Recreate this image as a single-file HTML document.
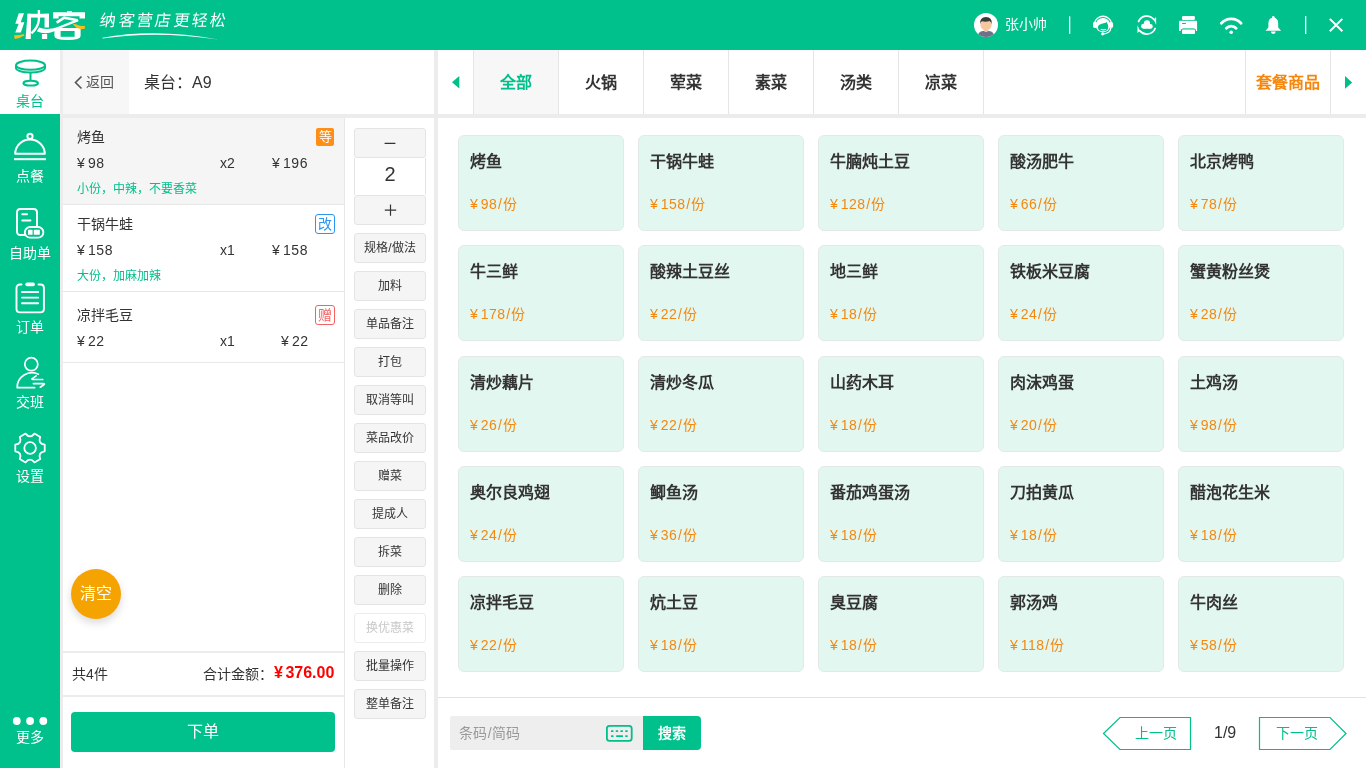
<!DOCTYPE html>
<html lang="zh-CN"><head><meta charset="utf-8">
<style>
*{margin:0;padding:0;box-sizing:border-box}
html,body{width:1366px;height:768px;overflow:hidden;background:#fff;font-family:"Liberation Sans",sans-serif;color:#333}
.a{position:absolute}
#hdr{left:0;top:0;width:1366px;height:50px;background:#00c08c}
#side{left:0;top:50px;width:60px;height:718px;background:#00c08c}
.nav{position:absolute;left:0;width:60px;text-align:center;color:#fff;font-size:14px;line-height:14px;white-space:nowrap}
.gap{background:#ececec}
.y{font-style:normal;margin-right:2.5px}
.item{position:absolute;left:63px;width:281px;border-bottom:1px solid #e8e8e8}
.item .t{position:absolute;left:14px;font-size:14px;line-height:14px;color:#333;white-space:nowrap}
.item .g{position:absolute;left:14px;font-size:12px;line-height:12px;color:#00bf8b;white-space:nowrap}
.badge{position:absolute;left:252px;width:20px;height:20px;font-size:14px;line-height:18px;text-align:center;border-radius:3px}
.btn{position:absolute;left:354px;width:72px;height:30px;background:#f5f5f5;border:1px solid #e4e4e4;border-radius:3px;font-size:12px;line-height:29.5px;text-align:center;color:#333;white-space:nowrap}
.tab{position:absolute;top:50px;width:85px;height:64px;border-right:1px solid #e6e6e6;text-align:center;font-size:16px;font-weight:bold;line-height:66px;color:#333}
.card{position:absolute;width:166px;height:96px;background:#e3f7f1;border:1px solid #e2e9e6;border-radius:6px}
.card .n{position:absolute;left:11px;top:17px;font-size:16px;line-height:18px;font-weight:bold;color:#333;white-space:nowrap}
.card .p{position:absolute;left:11px;top:60px;font-size:14px;line-height:16px;color:#f4880f;white-space:nowrap;letter-spacing:.5px}
</style></head><body><div id="wrap" style="position:absolute;left:0;top:0;width:1366px;height:768px;will-change:transform">
<!-- header -->
<div id="hdr" class="a"></div>
<svg class="a" style="left:0;top:0" width="100" height="50" viewBox="0 0 100 50">
<path d="M18.78 13.20L24.06 13.20L20.66 22.28L24.35 22.28L20.83 32.53L15.27 32.53L18.67 23.74L15.27 23.74Z" fill="#fff"/>
<path d="M27.57 13.78L31.08 13.78L30.79 38.97L25.52 38.97Z" fill="#fff"/>
<path d="M27.57 13.78L48.95 13.78L48.95 17.59L27.57 17.59Z" fill="#fff"/>
<path d="M44.55 13.78L48.95 13.78L48.95 27.4L44.55 27.6Z" fill="#fff"/>
<path d="M41.92 33.99L47.19 33.99L47.19 38.97L41.92 38.97Z" fill="#fff"/>
<path d="M38.9 10V19.5Q38.6 27 31.4 33.4" stroke="#fff" stroke-width="2.4" fill="none"/>
<path d="M67.05 11.1H71.9V13.5H67.05Z" fill="#fff"/>
<path d="M53.1 12.2H85V18.4H79.5V16.2H58.6V18.4H53.1Z" fill="#fff"/>
<path d="M54.4 27.9H80.6V36Q80.6 39.9 67.5 39.9Q54.4 39.9 54.4 36Z" fill="#fff"/>
<path d="M60.6 31H74.6V36.8H60.6Z" fill="#00c08c"/>
<path d="M56.6 22.7L64.3 17.7L77.6 20.3" stroke="#fff" stroke-width="2.7" fill="none" stroke-linejoin="round"/>
<path d="M77.8 19.1L62 25.2Q47.5 31.4 39.2 27.6L36.8 31.2Q45 35.4 54.4 31.3L61 27.9L78.6 21.3Z" fill="#fff"/>
<path d="M14.10 35.16Q18.78 35.45 24.06 33.99L24.35 35.45Q19.96 38.38 14.69 38.97Z" fill="#fbbd14"/>
<path d="M72.8 24.3Q75 23.3 77.5 25Q80 26.3 85 25.9L84.7 28.8Q80 29.3 77.5 28.2Q75 27 72.8 24.3Z" fill="#fbbd14"/>
</svg>
<div class="a" style="left:99px;top:12px;font-size:16px;line-height:17px;font-weight:300;color:#fff;letter-spacing:2.3px;transform:skewX(-8deg);transform-origin:0 100%">纳客营店更轻松</div>
<svg class="a" style="left:99px;top:25px" width="130" height="20"><path d="M3.5 12.8Q56.75 3.15 119 14.5Q56.75 5.6 3.5 13.6Z" fill="#fff"/></svg>

<svg class="a" style="left:960px;top:0" width="406" height="50" viewBox="960 0 406 50">
<defs><clipPath id="av"><circle cx="986" cy="24.9" r="12"/></clipPath></defs>
<circle cx="986" cy="24.9" r="12" fill="#fff"/>
<g clip-path="url(#av)">
<path d="M977.5 37Q978 31.5 983 31L986 30.5L989 31Q994 31.5 994.5 37Z" fill="#6f7189"/>
<path d="M984.3 28.5H987.7V31.5Q986 32.6 984.3 31.5Z" fill="#f2c29a"/>
<ellipse cx="986" cy="25" rx="5.6" ry="5.4" fill="#f5c8a0"/>
<path d="M980 24.5Q979.5 17 986 17Q992.5 17 991.8 24.5Q991.3 21.5 989.5 21Q986 22.3 982 21.3Q980.3 22 980 24.5Z" fill="#3a3a3a"/>
</g>
<rect x="1069" y="16.3" width="1.3" height="17.5" fill="#fff"/>
<rect x="1305" y="16" width="1.3" height="18" fill="#fff"/>
<g fill="#fff">
<circle cx="1103" cy="25.2" r="7.3"/>
<rect x="1093" y="21.8" width="4" height="6.2" rx="1.8"/>
<rect x="1109.2" y="22" width="3.9" height="6" rx="1.8"/>
<circle cx="1102.6" cy="34" r="1.45"/>
</g>
<path d="M1098 26.5Q1098.5 24.6 1101 24Q1104 23.4 1105.6 22.8L1106.6 21.9Q1108.3 24.5 1108.3 27.5Q1108 31.2 1103.2 31.2Q1098.3 31.2 1098 28Z" fill="#00c08c"/>
<g fill="none" stroke="#fff" stroke-width="1.3">
<path d="M1100.8 29.2Q1103.3 30.5 1105.9 29.2" stroke-width="1.1"/>
<path d="M1094.4 23.2A8.8 8.8 0 0 1 1111.6 23.2"/>
<path d="M1110.9 28Q1110.3 33.2 1103.5 34"/>
</g>
<g fill="none" stroke="#fff" stroke-width="1.8" stroke-linecap="round">
<path d="M1138.58 21.44A9 9 0 0 1 1153.89 19.56"/>
<path d="M1155.14 28.47A9 9 0 0 1 1139.91 30.89"/>
</g>
<path d="M1153.6 19.4L1156.1 17L1156.1 24.8Z" fill="#fff"/>
<path d="M1139.9 30.7L1137.5 32.9L1137.5 25.2Z" fill="#fff"/>
<g fill="#fff"><circle cx="1147" cy="23.4" r="3.1"/><circle cx="1143.5" cy="26.3" r="2.45"/><circle cx="1150.4" cy="26.4" r="2.35"/><rect x="1143.5" y="25" width="7" height="3.75"/></g>
<g fill="#fff">
<rect x="1182" y="16.1" width="12.9" height="3.8" rx="1.2"/>
<path d="M1180 20.8H1196.3Q1197.1 20.8 1197.1 21.6V31.1H1196Q1195.7 28.6 1193.6 28.6H1183.4Q1181.3 28.6 1180.4 31.1H1179V21.8Q1179 20.8 1180 20.8Z"/>
<rect x="1181.3" y="28.7" width="14.4" height="5.9" rx="1.3" fill="#00c08c"/><rect x="1182" y="29.6" width="13" height="4.3" rx="1"/>
</g>
<rect x="1182" y="23" width="4" height="1.1" rx=".5" fill="#00c08c"/>
<g fill="none" stroke="#fff" stroke-width="2.8" stroke-linecap="round">
<path d="M1221.3 23.2A13.6 13.6 0 0 1 1241.1 23.2"/>
<path d="M1226.3 28.3A6.8 6.8 0 0 1 1236.2 28.3"/>
</g>
<circle cx="1231.2" cy="32.2" r="1.8" fill="#fff"/>
<g fill="#fff">
<circle cx="1273.3" cy="17.2" r="1.3"/>
<path d="M1265.5 30.8L1268.4 27.4V23.3Q1268.6 18 1273.3 17.6Q1278 18 1278.2 23.3V27.4L1281.1 30.8Z"/>
<path d="M1270.9 31.5H1275.7Q1275.7 33.9 1273.3 33.9Q1270.9 33.9 1270.9 31.5Z"/>
</g>
<path d="M1329.8 18.9L1342.4 31.2M1342.4 18.9L1329.8 31.2" stroke="#fff" stroke-width="2" fill="none"/>
</svg>
<div class="a" style="left:1005px;top:16px;font-size:14px;line-height:16px;color:#fff">张小帅</div>

<!-- sidebar -->
<div id="side" class="a"></div>
<div class="a" style="left:0;top:50px;width:60px;height:64px;background:#fff"></div>
<div class="a gap" style="left:60px;top:50px;width:3px;height:718px"></div>
<svg class="a" style="left:0;top:0" width="60" height="768" viewBox="0 0 60 768">
<g fill="none" stroke="#00bf8b" stroke-width="2">
<ellipse cx="30.5" cy="65.2" rx="14.5" ry="4.6"/>
<path d="M16 65.5v2.5A14.5 4.6 0 0 0 45 68v-2.5"/>
<path d="M30.5 72.5v7.5"/>
<ellipse cx="30.7" cy="83.2" rx="7.3" ry="2.4"/>
</g>
<g fill="none" stroke="#fff" stroke-width="2">
<circle cx="30" cy="136.3" r="2.6"/>
<path d="M15.2 153.8A14.8 14.3 0 0 1 44.8 153.8Z" stroke-linejoin="round"/>
<path d="M14 159.2H46"/>
</g>
<g fill="none" stroke="#fff" stroke-width="1.9">
<path d="M26 235H20.5Q17 235 17 231.5V212.5Q17 209 20.5 209H33.5Q37 209 37 212.5V227"/>
<path d="M22.3 214.3H27M22.3 220.5H30.5" stroke-linecap="round"/>
<rect x="24.8" y="227" width="18.6" height="10.6" rx="5.3" fill="#00c08c"/>
</g>
<g fill="#fff"><rect x="28" y="229.8" width="4.6" height="5" rx=".6"/><rect x="33.8" y="229.8" width="6" height="5" rx=".6"/></g>
<g fill="none" stroke="#fff" stroke-width="1.9" stroke-linecap="round">
<path d="M21.5 284.5H20Q16.5 284.5 16.5 288V309Q16.5 312.4 20 312.4H40.4Q43.9 312.4 43.9 309V288Q43.9 284.5 40.4 284.5H38.5"/>
<path d="M22 292H38.2M22 297.6H38.2M22 303.3H38.2"/>
</g>
<rect x="25.3" y="282.6" width="9.6" height="3.6" rx="1.8" fill="#fff"/>
<g fill="none" stroke="#fff" stroke-width="1.7" stroke-linecap="round" stroke-linejoin="round">
<circle cx="31.3" cy="364.2" r="6.5"/>
<path d="M34.6 387.7H17.2A14.8 14.8 0 0 1 38.4 374.2"/>
<path d="M36.2 375.9L32.2 378.6Q31.6 379.4 32.6 379.5H42.7"/>
<path d="M33.4 383.6H43.6Q44.8 383.7 44 384.6L40.3 387.2"/>
</g>
<g fill="none" stroke="#fff" stroke-width="1.8">
<path d="M44.72 451.35L44.72 444.65Q37.60 443.61 40.26 436.92L34.47 433.58Q30.00 439.22 25.53 433.58L19.74 436.92Q22.40 443.61 15.28 444.65L15.28 451.35Q22.40 452.39 19.74 459.08L25.53 462.42Q30.00 456.78 34.47 462.42L40.26 459.08Q37.60 452.39 44.72 451.35Z" stroke-linejoin="round"/>
<circle cx="30.1" cy="448" r="5.8"/>
</g>
<g fill="#fff"><circle cx="16.8" cy="721" r="3.9"/><circle cx="30.1" cy="721" r="3.9"/><circle cx="43.3" cy="721" r="3.9"/></g>
</svg>
<div class="nav" style="top:94px;color:#00bf8b">桌台</div>
<div class="nav" style="top:169px">点餐</div>
<div class="nav" style="top:246px">自助单</div>
<div class="nav" style="top:320px">订单</div>
<div class="nav" style="top:395px">交班</div>
<div class="nav" style="top:469px">设置</div>
<div class="nav" style="top:730px">更多</div>


<!-- left top bar -->
<div class="a" style="left:63px;top:50px;width:66px;height:64px;background:#f7f7f7"></div>
<svg class="a" style="left:73px;top:75px" width="12" height="16"><path d="M8.5 1.5L2.5 7.5L8.5 13.5" fill="none" stroke="#555" stroke-width="1.6"/></svg>
<div class="a" style="left:86px;top:74px;font-size:14px;line-height:16px;color:#555">返回</div>
<div class="a" style="left:144px;top:73.5px;font-size:16px;line-height:18px;color:#333">桌台：A9</div>
<div class="a gap" style="left:63px;top:114px;width:371px;height:4px"></div>

<!-- divider between left and right -->
<div class="a gap" style="left:434px;top:50px;width:4px;height:718px"></div>
<div class="a" style="left:344px;top:118px;width:1px;height:650px;background:#e8e8e8"></div>

<!-- order items -->
<div class="item" style="top:118px;height:87px;background:#f5f5f5">
  <div class="t" style="top:12px">烤鱼</div>
  <div class="badge" style="top:10px;left:253px;width:18px;height:18px;font-size:13px;line-height:18px;background:#ff8f14;color:#fff;border:0;border-radius:2px">等</div>
  <div class="t" style="top:38px;letter-spacing:.6px"><i class="y">¥</i>98</div>
  <div class="t" style="top:38px;left:157px">x2</div>
  <div class="t" style="top:38px;left:209px;letter-spacing:.6px"><i class="y">¥</i>196</div>
  <div class="g" style="top:65px">小份，中辣，不要香菜</div>
</div>
<div class="item" style="top:205px;height:87px;background:#fff">
  <div class="t" style="top:12px">干锅牛蛙</div>
  <div class="badge" style="top:9px;color:#2d96f0;border:1px solid #2d96f0">改</div>
  <div class="t" style="top:38px;letter-spacing:.6px"><i class="y">¥</i>158</div>
  <div class="t" style="top:38px;left:157px">x1</div>
  <div class="t" style="top:38px;left:209px;letter-spacing:.6px"><i class="y">¥</i>158</div>
  <div class="g" style="top:65px">大份，加麻加辣</div>
</div>
<div class="item" style="top:292px;height:71px;background:#fff">
  <div class="t" style="top:16px">凉拌毛豆</div>
  <div class="badge" style="top:13px;color:#f56262;border:1px solid #f56262">赠</div>
  <div class="t" style="top:42px;letter-spacing:.6px"><i class="y">¥</i>22</div>
  <div class="t" style="top:42px;left:157px">x1</div>
  <div class="t" style="top:42px;left:218px;letter-spacing:.6px"><i class="y">¥</i>22</div>
</div>

<!-- clear button -->
<div class="a" style="left:71px;top:569px;width:50px;height:50px;border-radius:50%;background:#f5a300;box-shadow:0 4px 8px rgba(0,0,0,.15);color:#fff;font-size:16px;line-height:50px;text-align:center">清空</div>

<!-- summary -->
<div class="a" style="left:63px;top:651px;width:281px;height:2px;background:#ececec"></div>
<div class="a" style="left:72px;top:666px;font-size:14px;line-height:16px">共4件</div>
<div class="a" style="left:203px;top:666px;font-size:14px;line-height:16px">合计金额：</div>
<div class="a" style="left:274px;top:664px;font-size:16px;line-height:18px;color:#f00;font-weight:bold"><i class="y">¥</i>376.00</div>
<div class="a" style="left:63px;top:695px;width:281px;height:2px;background:#ececec"></div>
<div class="a" style="left:71px;top:712px;width:264px;height:40px;border-radius:4px;background:#00c08c;color:#fff;font-size:16px;line-height:40px;text-align:center">下单</div>

<!-- buttons column -->
<div class="btn" style="top:128px;height:30px"></div>
<div class="a" style="left:354px;top:158px;width:72px;height:37px;border-left:1px solid #e4e4e4;border-right:1px solid #e4e4e4;background:#fff;text-align:center;font-size:20px;line-height:33px">2</div>
<div class="btn" style="top:195px;height:30px"></div>
<svg class="a" style="left:354px;top:128px" width="72" height="97" viewBox="354 128 72 97"><path d="M384.6 143.4H395.4M384.8 210.2H396.2M390.5 204.6V215.8" stroke="#333" stroke-width="1.2" fill="none"/></svg>
<div class="btn" style="top:233px">规格/做法</div>
<div class="btn" style="top:271px">加料</div>
<div class="btn" style="top:309px">单品备注</div>
<div class="btn" style="top:347px">打包</div>
<div class="btn" style="top:385px">取消等叫</div>
<div class="btn" style="top:423px">菜品改价</div>
<div class="btn" style="top:461px">赠菜</div>
<div class="btn" style="top:499px">提成人</div>
<div class="btn" style="top:537px">拆菜</div>
<div class="btn" style="top:575px">删除</div>
<div class="btn" style="top:613px;background:#fff;color:#c8c8c8;border-color:#ececec">换优惠菜</div>
<div class="btn" style="top:651px">批量操作</div>
<div class="btn" style="top:689px">整单备注</div>

<!-- tabs -->
<div class="a" style="left:473px;top:50px;width:1px;height:64px;background:#e6e6e6"></div>
<div class="tab" style="left:474px;background:#f7f7f7;color:#00bf8b">全部</div>
<div class="tab" style="left:559px">火锅</div>
<div class="tab" style="left:644px">荤菜</div>
<div class="tab" style="left:729px">素菜</div>
<div class="tab" style="left:814px">汤类</div>
<div class="tab" style="left:899px">凉菜</div>
<div class="a" style="left:1245px;top:50px;width:1px;height:64px;background:#e6e6e6"></div>
<div class="tab" style="left:1246px;color:#f5870f">套餐商品</div>
<svg class="a" style="left:451.7px;top:76.4px" width="9" height="13"><path d="M7.3 0L0 6.2L7.3 12.4Z" fill="#00bf8b"/></svg>
<svg class="a" style="left:1345px;top:76px" width="9" height="13"><path d="M0 0L7.2 6.4L0 12.8Z" fill="#00bf8b"/></svg>
<div class="a gap" style="left:438px;top:114px;width:928px;height:4px"></div>

<!-- bottom bar -->
<div class="a" style="left:438px;top:697px;width:928px;height:1px;background:#e2e2e2"></div>
<div class="a" style="left:450px;top:716px;width:194px;height:34px;background:#eeeeee;border-radius:2px 0 0 2px"></div>
<div class="a" style="left:459px;top:724.5px;font-size:14px;line-height:16px;color:#999;letter-spacing:.4px">条码/简码</div>
<svg class="a" style="left:600px;top:712px" width="40" height="40" viewBox="600 712 40 40">
<rect x="606.9" y="725.8" width="24.8" height="15.1" rx="2.6" fill="none" stroke="#00bf8b" stroke-width="1.8"/>
<g fill="#00bf8b"><rect x="611" y="730.3" width="2.5" height="1.7" rx=".5"/><rect x="615.7" y="730.3" width="2.5" height="1.7" rx=".5"/><rect x="620.4" y="730.3" width="2.5" height="1.7" rx=".5"/><rect x="625.2" y="730.3" width="2.5" height="1.7" rx=".5"/>
<rect x="611" y="735.2" width="2.5" height="1.7" rx=".5"/><rect x="616.1" y="735.2" width="6.9" height="1.7" rx=".5"/><rect x="625.2" y="735.2" width="2.5" height="1.7" rx=".5"/></g>
</svg>
<div class="a" style="left:643px;top:716px;width:58px;height:34px;background:#00c08c;border-radius:0 4px 4px 0;color:#fff;font-size:14px;line-height:34px;text-align:center;-webkit-text-stroke:.45px #fff">搜索</div>
<div class="a" style="left:1214px;top:724px;font-size:16px;line-height:18px;color:#333">1/9</div>
<div class="a" style="left:1135px;top:725px;font-size:14px;line-height:16px;color:#00bf8b">上一页</div>
<div class="a" style="left:1276px;top:725px;font-size:14px;line-height:16px;color:#00bf8b">下一页</div>
<svg class="a" style="left:1100px;top:714px" width="250" height="40">
<path d="M3.5 19.5 L20 3.5 L90.5 3.5 L90.5 35.5 L20 35.5 Z" fill="none" stroke="#00bf8b" stroke-width="1.2"/>
<path d="M159.5 3.5 L230 3.5 L246 19.5 L230 35.5 L159.5 35.5 Z" fill="none" stroke="#00bf8b" stroke-width="1.2"/>
</svg>

<!-- CARDS -->
<div class="card" style="left:458px;top:135px"><div class="n">烤鱼</div><div class="p"><i class="y">¥</i>98<b style="font-weight:normal;margin:0 .5px">/</b>份</div></div>
<div class="card" style="left:638px;top:135px"><div class="n">干锅牛蛙</div><div class="p"><i class="y">¥</i>158<b style="font-weight:normal;margin:0 .5px">/</b>份</div></div>
<div class="card" style="left:818px;top:135px"><div class="n">牛腩炖土豆</div><div class="p"><i class="y">¥</i>128<b style="font-weight:normal;margin:0 .5px">/</b>份</div></div>
<div class="card" style="left:998px;top:135px"><div class="n">酸汤肥牛</div><div class="p"><i class="y">¥</i>66<b style="font-weight:normal;margin:0 .5px">/</b>份</div></div>
<div class="card" style="left:1178px;top:135px"><div class="n">北京烤鸭</div><div class="p"><i class="y">¥</i>78<b style="font-weight:normal;margin:0 .5px">/</b>份</div></div>
<div class="card" style="left:458px;top:245px"><div class="n">牛三鲜</div><div class="p"><i class="y">¥</i>178<b style="font-weight:normal;margin:0 .5px">/</b>份</div></div>
<div class="card" style="left:638px;top:245px"><div class="n">酸辣土豆丝</div><div class="p"><i class="y">¥</i>22<b style="font-weight:normal;margin:0 .5px">/</b>份</div></div>
<div class="card" style="left:818px;top:245px"><div class="n">地三鲜</div><div class="p"><i class="y">¥</i>18<b style="font-weight:normal;margin:0 .5px">/</b>份</div></div>
<div class="card" style="left:998px;top:245px"><div class="n">铁板米豆腐</div><div class="p"><i class="y">¥</i>24<b style="font-weight:normal;margin:0 .5px">/</b>份</div></div>
<div class="card" style="left:1178px;top:245px"><div class="n">蟹黄粉丝煲</div><div class="p"><i class="y">¥</i>28<b style="font-weight:normal;margin:0 .5px">/</b>份</div></div>
<div class="card" style="left:458px;top:356px"><div class="n">清炒藕片</div><div class="p"><i class="y">¥</i>26<b style="font-weight:normal;margin:0 .5px">/</b>份</div></div>
<div class="card" style="left:638px;top:356px"><div class="n">清炒冬瓜</div><div class="p"><i class="y">¥</i>22<b style="font-weight:normal;margin:0 .5px">/</b>份</div></div>
<div class="card" style="left:818px;top:356px"><div class="n">山药木耳</div><div class="p"><i class="y">¥</i>18<b style="font-weight:normal;margin:0 .5px">/</b>份</div></div>
<div class="card" style="left:998px;top:356px"><div class="n">肉沫鸡蛋</div><div class="p"><i class="y">¥</i>20<b style="font-weight:normal;margin:0 .5px">/</b>份</div></div>
<div class="card" style="left:1178px;top:356px"><div class="n">土鸡汤</div><div class="p"><i class="y">¥</i>98<b style="font-weight:normal;margin:0 .5px">/</b>份</div></div>
<div class="card" style="left:458px;top:466px"><div class="n">奥尔良鸡翅</div><div class="p"><i class="y">¥</i>24<b style="font-weight:normal;margin:0 .5px">/</b>份</div></div>
<div class="card" style="left:638px;top:466px"><div class="n">鲫鱼汤</div><div class="p"><i class="y">¥</i>36<b style="font-weight:normal;margin:0 .5px">/</b>份</div></div>
<div class="card" style="left:818px;top:466px"><div class="n">番茄鸡蛋汤</div><div class="p"><i class="y">¥</i>18<b style="font-weight:normal;margin:0 .5px">/</b>份</div></div>
<div class="card" style="left:998px;top:466px"><div class="n">刀拍黄瓜</div><div class="p"><i class="y">¥</i>18<b style="font-weight:normal;margin:0 .5px">/</b>份</div></div>
<div class="card" style="left:1178px;top:466px"><div class="n">醋泡花生米</div><div class="p"><i class="y">¥</i>18<b style="font-weight:normal;margin:0 .5px">/</b>份</div></div>
<div class="card" style="left:458px;top:576px"><div class="n">凉拌毛豆</div><div class="p"><i class="y">¥</i>22<b style="font-weight:normal;margin:0 .5px">/</b>份</div></div>
<div class="card" style="left:638px;top:576px"><div class="n">炕土豆</div><div class="p"><i class="y">¥</i>18<b style="font-weight:normal;margin:0 .5px">/</b>份</div></div>
<div class="card" style="left:818px;top:576px"><div class="n">臭豆腐</div><div class="p"><i class="y">¥</i>18<b style="font-weight:normal;margin:0 .5px">/</b>份</div></div>
<div class="card" style="left:998px;top:576px"><div class="n">郭汤鸡</div><div class="p"><i class="y">¥</i>118<b style="font-weight:normal;margin:0 .5px">/</b>份</div></div>
<div class="card" style="left:1178px;top:576px"><div class="n">牛肉丝</div><div class="p"><i class="y">¥</i>58<b style="font-weight:normal;margin:0 .5px">/</b>份</div></div>
</div></body></html>
